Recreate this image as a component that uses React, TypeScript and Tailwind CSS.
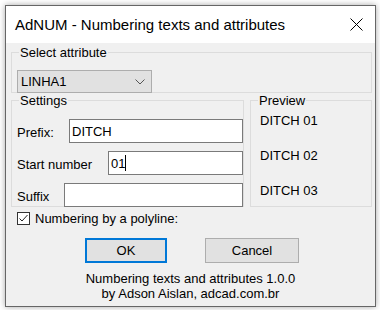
import { ReactNode } from 'react';

const GroupBox = ({ label, className, children }: { label: string; className?: string; children: ReactNode }) => (
  <fieldset className={`border border-[#dcdcdc] ${className}`}>
    <legend className="ml-[7px] px-[1px] leading-[15px]">{label}</legend>
    {children}
  </fieldset>
);

const TextField = ({ label, labelWidth, value, caret }: { label: string; labelWidth: string; value: string; caret?: boolean }) => (
  <div className="flex items-center">
    <span className={`${labelWidth} leading-[15px] pt-[2px]`}>{label}</span>
    <div className="flex-1 h-[24px] bg-white border border-[#7a7a7a] flex items-center pl-[2px] leading-[15px]">
      <span>{value}</span>
      {caret && <span className="w-px h-[16px] bg-black" />}
    </div>
  </div>
);

export default function App() {
  return (
    <div className="w-[380px] h-[310px] bg-white pt-[5px] pl-[5px] font-['Liberation_Sans',Arial,sans-serif] text-[13px] text-black">
      <div className="w-[371px] h-[302px] border border-[#666] bg-[#f0f0f0] flex flex-col shadow-[0_0_6px_rgba(0,0,0,0.35)]">
        {/* Title bar */}
        <div className="h-[37px] bg-white flex items-center justify-between pl-[9px] pr-[12px]">
          <span className="text-[15px] leading-[18px]">AdNUM - Numbering texts and attributes</span>
          <svg width="13" height="13" viewBox="0 0 13 13">
            <path d="M0.5 0.5 L12.5 12.5 M12.5 0.5 L0.5 12.5" stroke="#000" strokeWidth="1" fill="none" />
          </svg>
        </div>

        {/* Client area */}
        <div className="flex flex-col pl-[5px]">
          <GroupBox label="Select attribute" className="w-[361px] mt-[2px]">
            <div className="pl-[5px]">
              <div className="mt-[10px] mb-[-1px] w-[135px] h-[23px] bg-[#e1e1e1] border border-[#adadad] flex items-center justify-between pl-[3px] pr-[6px]">
                <span className="leading-[15px]">LINHA1</span>
                <svg width="10" height="6" viewBox="0 0 10 6">
                  <path d="M0.5 0.5 L5 5 L9.5 0.5" stroke="#555" strokeWidth="1" fill="none" />
                </svg>
              </div>
            </div>
          </GroupBox>

          <div className="flex gap-[6px]">
            <GroupBox label="Settings" className="w-[233px]">
              <div className="pl-[5px] mt-[11px] mb-[-1px] flex flex-col gap-[8px]">
                <TextField label="Prefix:" labelWidth="w-[52px]" value="DITCH" />
                <TextField label="Start number" labelWidth="w-[91px]" value="01" caret />
                <TextField label="Suffix" labelWidth="w-[47px]" value="" />
              </div>
            </GroupBox>

            <GroupBox label="Preview" className="w-[122px]">
              <div className="pl-[9px] mt-[5px] flex flex-col gap-[20px] leading-[15px]">
                <span>DITCH 01</span>
                <span>DITCH 02</span>
                <span>DITCH 03</span>
              </div>
            </GroupBox>
          </div>

          {/* Checkbox */}
          <div className="mt-[4px] pl-[6px] flex items-center gap-[5px]">
            <div className="w-[13px] h-[13px] bg-white border border-[#333] flex items-center justify-center">
              <svg width="11" height="11" viewBox="0 0 11 11">
                <path d="M1.5 5.5 L4 8 L9.5 2" stroke="#222" strokeWidth="1" fill="none" />
              </svg>
            </div>
            <span className="leading-[15px]">Numbering by a polyline:</span>
          </div>

          {/* Buttons */}
          <div className="mt-[12px] pl-[74px] flex gap-[38px]">
            <button className="w-[82px] h-[25px] bg-[#e1e1e1] border-2 border-[#0078d7] leading-[15px]">OK</button>
            <button className="w-[94px] h-[25px] bg-[#e1e1e1] border border-[#adadad] leading-[15px]">Cancel</button>
          </div>
        </div>

        {/* Footer */}
        <div className="mt-[8px] flex flex-col items-center leading-[15px]">
          <span>Numbering texts and attributes 1.0.0</span>
          <span>by Adson Aislan, adcad.com.br</span>
        </div>
      </div>
    </div>
  );
}
